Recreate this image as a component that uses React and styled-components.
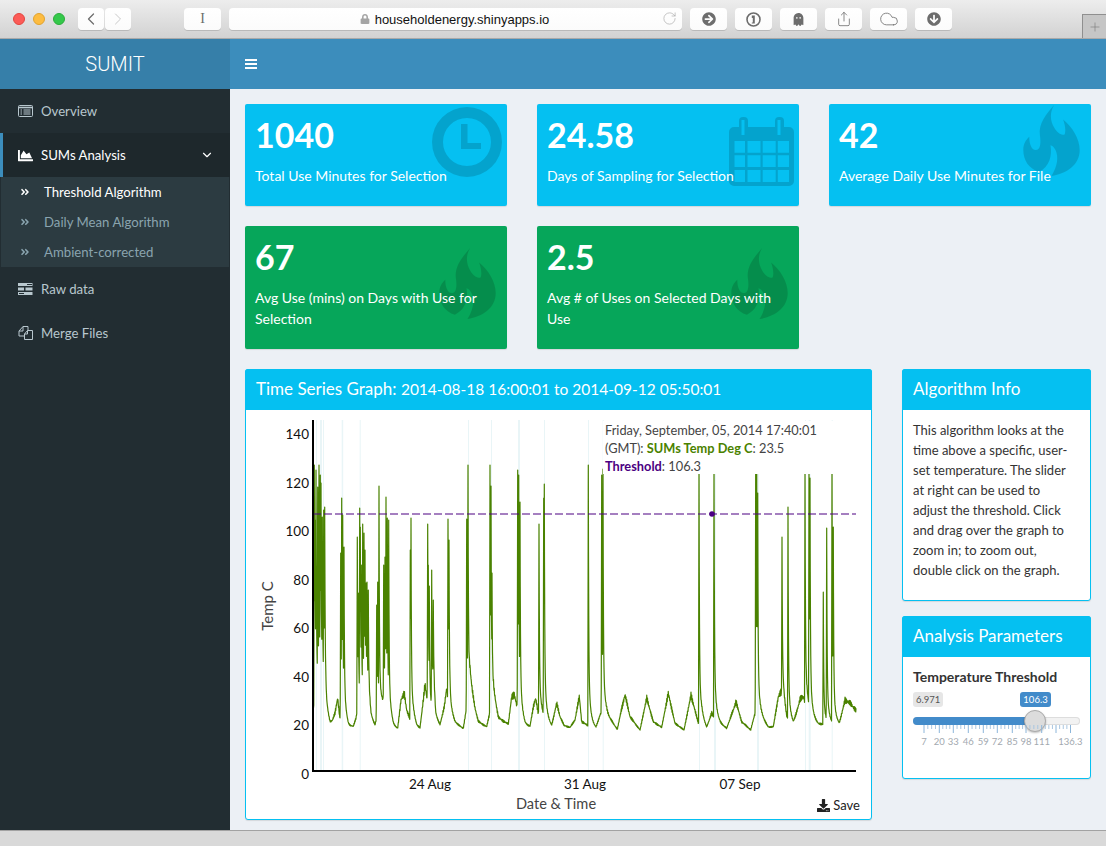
import React from 'react';
import styled, { createGlobalStyle } from 'styled-components';
import { ChevronLeft, ChevronRight, ChevronDown, RotateCw, Share, Cloud, Plus } from 'lucide-react';
import {
  FaLock,
  FaArrowCircleRight,
  FaArrowCircleDown,
  FaGhost,
  FaChartArea,
  FaAngleDoubleRight,
  FaDownload,
} from 'react-icons/fa';

const UI_FONT = '"Lato", "Noto Sans", sans-serif';

const GlobalStyle = createGlobalStyle`
  html, body {
    margin: 0;
    height: 100%;
    overflow: hidden;
    background: #ecf0f5;
    font-family: ${UI_FONT};
  }
  * { box-sizing: border-box; }
`;

const Page = styled.div`
  display: flex;
  flex-direction: column;
  height: 846px;
`;

/* ---------- browser chrome ---------- */

const Chrome = styled.div`
  display: flex;
  align-items: flex-start;
  height: 39px;
  padding: 8px 0 0 13px;
  background: linear-gradient(#ededed, #d2d2d2);
  border-bottom: 1px solid #a9a9a9;
`;

const Light = styled.span`
  width: 12px;
  height: 12px;
  margin: 5px 8px 0 0;
  border-radius: 50%;
  background: ${props => props.$color};
  border: 1px solid ${props => props.$edge};
`;

const ToolButton = styled.div`
  display: flex;
  align-items: center;
  justify-content: center;
  width: ${props => props.$w || 37}px;
  height: 22px;
  margin-left: ${props => props.$ml || 8}px;
  background: linear-gradient(#fff, #fbfbfb);
  border-radius: 4px;
  box-shadow: 0 1px 0 #b9b9b9;
  color: #6d6d6d;
  font: 14px "Liberation Serif", serif;
`;

const UrlBar = styled(ToolButton)`
  position: relative;
  gap: 5px;
  padding-right: 2px;
  font: 13px "Liberation Sans", sans-serif;
  color: #111;
  svg:first-child { color: #a4a4a4; }
`;

const Reload = styled.span`
  position: absolute;
  right: 5px;
  top: 3px;
  color: #6d6d6d;
`;

const NewTab = styled.div`
  display: flex;
  align-items: center;
  justify-content: center;
  width: 24px;
  height: 24px;
  margin: 6px 0 0 auto;
  background: #c6c6c6;
  border: 1px solid #8f8f8f;
  border-width: 1px 0 0 1px;
  color: #777;
`;

const WindowFoot = styled.div`
  height: 16px;
  background: #d9d9d9;
  border-top: 1px solid #a2a2a2;
`;

/* ---------- admin layout ---------- */

const Header = styled.header`
  display: flex;
  height: 50px;
  background: #3c8dbc;
`;

const Logo = styled.div`
  width: 230px;
  background: #367fa9;
  color: #fff;
  font: 300 20px/50px "Roboto", sans-serif;
  text-align: center;
`;

const Toggle = styled.div`
  display: flex;
  align-items: center;
  padding-left: 15px;
  color: #fff;
`;

const Body = styled.div`
  display: flex;
  flex: 1;
  min-height: 0;
`;

const Sidebar = styled.nav`
  width: 230px;
  background: #222d32;
  font-size: 13.2px;
`;

const MenuItem = styled.div`
  display: flex;
  align-items: center;
  height: 44px;
  padding-left: ${props => (props.$active ? 15 : 18)}px;
  padding-right: 16px;
  color: ${props => (props.$active ? '#fff' : '#b8c7ce')};
  background: ${props => (props.$active ? '#1e282c' : 'transparent')};
  border-left: ${props => (props.$active ? '3px solid #3c8dbc' : 'none')};
`;

const MenuIcon = styled.span`
  display: flex;
  justify-content: center;
  width: 15px;
  margin-right: 8px;
`;

const Caret = styled.span`
  display: flex;
  margin-left: auto;
`;

const SubMenu = styled.div`
  margin: 0 1px;
  padding: 0;
  background: #2c3b41;
`;

const SubItem = styled.div`
  display: flex;
  align-items: center;
  height: 30px;
  padding-left: 19px;
  color: ${props => (props.$active ? '#fff' : '#8aa4af')};
  svg { margin-right: 14px; }
`;

const Content = styled.main`
  flex: 1;
  padding: 15px;
`;

const StatGrid = styled.div`
  display: grid;
  grid-template-columns: repeat(3, 262px);
  gap: 20px 30px;
  margin-bottom: 20px;
`;

const StatBox = styled.div`
  position: relative;
  overflow: hidden;
  min-height: 102px;
  padding: 10px;
  border-radius: 2px;
  color: #fff;
  background: ${props => (props.$tone === 'green' ? '#06a65a' : '#05c0f1')};
  box-shadow: 0 1px 1px rgba(0, 0, 0, 0.1);
`;

const StatValue = styled.h3`
  position: relative;
  margin: 0 0 9px;
  font-size: 34px;
  font-weight: 700;
  line-height: 42px;
`;

const StatLabel = styled.p`
  position: relative;
  margin: 0 0 10px;
  font-size: 14px;
  line-height: 21px;
`;

const StatIcon = styled.svg`
  position: absolute;
  top: ${props => props.$top}px;
  right: ${props => props.$right}px;
  fill: rgba(0, 0, 0, 0.15);
`;

const Lower = styled.div`
  display: grid;
  grid-template-columns: 627px 189px;
  gap: 30px;
  align-items: start;
`;

const SideStack = styled.div`
  display: flex;
  flex-direction: column;
  gap: 15px;
`;

const Panel = styled.section`
  border: 1px solid #05c0f1;
  border-radius: 3px;
  background: #fff;
  box-shadow: 0 1px 1px rgba(0, 0, 0, 0.1);
`;

const PanelTitle = styled.h3`
  margin: -1px -1px 0;
  padding: 0 11px;
  height: 41px;
  background: #05c0f1;
  border-radius: 3px 3px 0 0;
  color: #fff;
  font-size: 17px;
  font-weight: 400;
  line-height: 39px;
  white-space: nowrap;
`;

// Lato digits run wider than the rest of the title
const TitleRange = styled.span`
  font-size: 15.5px;
`;

const ChartBody = styled.div`
  position: relative;
  height: 409px;
`;

const ChartSvg = styled.svg`
  display: block;
`;

const AxisText = styled.text`
  font-family: ${UI_FONT};
  font-size: ${props => props.$size || 13.5}px;
  fill: ${props => props.$fill || '#111'};
  text-anchor: ${props => props.$anchor || 'middle'};
`;

const Legend = styled.div`
  position: absolute;
  left: 357px;
  top: 11px;
  width: 250px;
  height: 53px;
  padding-left: 2px;
  background: #fff;
  color: #444;
  font-size: 12.8px;
  line-height: 18px;
  white-space: nowrap;
`;

const SeriesName = styled.b`
  color: ${props => props.$color};
`;

const SaveLink = styled.div`
  position: absolute;
  right: 11px;
  bottom: 6px;
  display: flex;
  align-items: center;
  gap: 3px;
  color: #222;
  font-size: 13px;
`;

const InfoText = styled.div`
  height: 190px;
  padding: 10px;
  color: #333;
  font-size: 13px;
  line-height: 20px;
  white-space: nowrap;
`;

const ParamBody = styled.div`
  height: 121px;
  padding: 10px;
`;

const ParamLabel = styled.div`
  color: #333;
  font-size: 14px;
  font-weight: 700;
  line-height: 20px;
  white-space: nowrap;
`;

const SliderWrap = styled.div`
  position: relative;
  height: 60px;
  margin-top: 5px;
`;

const Badge = styled.span`
  position: absolute;
  top: 0;
  padding: 0 3px;
  border-radius: 3px;
  font-size: 9.5px;
  line-height: 15px;
  white-space: nowrap;
  color: ${props => (props.$on ? '#fff' : '#555')};
  background: ${props => (props.$on ? '#428bca' : '#e6e6e6')};
`;

const Track = styled.div`
  position: absolute;
  top: 25px;
  left: 0;
  right: 0;
  height: 8px;
  border-radius: 4px;
  background: #f2f2f2;
  box-shadow: inset 0 0 0 1px #ddd;
`;

const TrackFill = styled.div`
  height: 100%;
  border-radius: 4px 0 0 4px;
  background: #428bca;
`;

const Handle = styled.div`
  position: absolute;
  top: 18px;
  width: 22px;
  height: 22px;
  margin-left: -11px;
  border-radius: 50%;
  border: 1px solid #aaa;
  background: #dcdcdc;
  box-shadow: 0 1px 2px rgba(0, 0, 0, 0.25);
`;

const TickSvg = styled.svg`
  position: absolute;
  top: 33px;
  left: 0;
`;

/* ---------- icons ---------- */

const Flame = ({ top }) => (
  <StatIcon $top={top} $right={11} width="57" height="71" viewBox="25 14 170 214">
    <path d="M118 14C104 36 106 62 118 82C126 96 140 108 150 102C154 90 150 72 145 58C172 80 195 115 195 150C195 195 155 222 110 228C128 200 132 170 122 150C117 140 112 136 107 135C112 165 105 200 72 215C42 208 25 180 25 150C25 132 32 120 43 110C43 132 50 150 62 150C78 150 78 125 75 105C70 70 95 40 118 14Z" />
  </StatIcon>
);

const ClockIcon = () => (
  <StatIcon $top={3} $right={5} width="70" height="70" viewBox="0 0 70 70">
    <path
      fillRule="evenodd"
      d="M35 0a35 35 0 1 0 0 70a35 35 0 1 0 0-70ZM35 11a24 24 0 1 1 0 48a24 24 0 1 1 0-48Z"
    />
    <path d="M29 17h6.5v19h13.5v6h-20Z" />
  </StatIcon>
);

// calendar: body with a 4x3 grid of holes, binder rings poke out on top
const CalendarIcon = () => {
  const cols = [[5.5, 16], [18.5, 31.5], [33.7, 46.7], [48.8, 60]];
  const rows = [[25, 36.7], [39.3, 51], [54, 66]];
  const holes = rows
    .flatMap(([y0, y1]) => cols.map(([x0, x1]) => `M${x0} ${y0}H${x1}V${y1}H${x0}Z`))
    .join('');
  return (
    <StatIcon $top={12} $right={5} width="65" height="70" viewBox="0 0 65 70">
      <path
        fillRule="evenodd"
        d={`M5 11H60a5 5 0 0 1 5 5V65a5 5 0 0 1-5 5H5a5 5 0 0 1-5-5V16a5 5 0 0 1 5-5ZM12.5 11h3v8h-3ZM48.5 11h3v8h-3Z${holes}`}
      />
      <path
        fillRule="evenodd"
        d="M10 11V5a4 4 0 0 1 4-4h1a4 4 0 0 1 4 4v6ZM46 11V5a4 4 0 0 1 4-4h1a4 4 0 0 1 4 4v6ZM12.5 11h3V4h-3ZM48.5 11h3V4h-3Z"
      />
    </StatIcon>
  );
};

const OnePassword = () => (
  <svg width="15" height="15" viewBox="0 0 15 15">
    <circle cx="7.5" cy="7.5" r="6.5" fill="none" stroke="#6d6d6d" strokeWidth="1.6" />
    <path d="M5.8 3.6h3v8h-3v-1.2h1V6h-1Z" fill="#6d6d6d" />
  </svg>
);

const MenuBars = () => (
  <svg width="12" height="10" viewBox="0 0 12 10" fill="currentColor">
    <path d="M0 0h12v2H0ZM0 4h12v2H0ZM0 8h12v2H0Z" />
  </svg>
);

const OverviewIcon = () => (
  <svg width="15" height="12" viewBox="0 0 15 12" fill="none" stroke="currentColor">
    <rect x="0.5" y="0.5" width="14" height="11" rx="1" />
    <path d="M0.5 2.5h14" strokeWidth="1.6" />
    <path d="M2.5 5h1.5M5.5 5h7M2.5 7h1.5M5.5 7h7M2.5 9h1.5M5.5 9h7" />
  </svg>
);

const RawDataIcon = () => (
  <svg width="15" height="12" viewBox="0 0 15 12" fill="currentColor">
    <path d="M0 0h14.5v3H0ZM0 4.5h6v3H0ZM7.5 4.5h7v3h-7ZM0 9h14.5v3H0Z" />
    <path d="M9 1h5v1H9ZM1 10h5v1H1Z" fill="#222d32" />
  </svg>
);

const MergeIcon = () => (
  <svg width="15" height="14" viewBox="0 0 15 14" fill="none" stroke="currentColor">
    <path d="M5 .5h5v4M5 .5l-4 4.5v5h5M5 .5v4.5H1M6.5 13.5V8l3-3.5h5v9ZM9.5 4.5V8h-3" />
  </svg>
);

/* ---------- chart data, all in page pixels ---------- */

const fromZoom = (list, ox, oy) => list.map(([x, y]) => [ox + x / 3, oy + y / 3]);

const baseLine = [
  ...fromZoom(
    [[205, 260], [215, 230], [222, 230], [240, 230], [245, 290], [255, 315], [262, 305], [270, 280], [278, 235], [284, 290], [300, 300], [310, 323], [325, 320], [333, 295], [340, 250], [372, 250], [378, 300], [390, 318], [396, 290], [420, 250], [432, 290], [445, 322], [458, 327], [468, 240], [478, 222], [485, 270], [495, 297], [505, 300], [515, 322], [525, 325], [535, 240], [540, 195], [548, 250], [558, 280], [565, 200], [572, 300], [585, 317], [598, 260], [605, 205], [618, 290], [630, 310], [655, 325], [675, 195], [690, 270], [700, 305], [725, 320], [745, 230], [760, 295], [790, 312], [800, 230], [808, 225], [815, 255], [825, 290], [840, 318], [855, 320], [865, 260], [872, 235], [880, 280], [905, 305], [920, 320], [935, 250], [945, 290], [958, 318]],
    245,
    620
  ),
  ...fromZoom(
    [[8, 315], [30, 322], [45, 300], [58, 230], [65, 305], [82, 315], [95, 320], [108, 325], [122, 280], [140, 290], [155, 305], [172, 328], [185, 265], [195, 225], [210, 290], [240, 330], [260, 235], [280, 305], [305, 322], [325, 220], [345, 310], [372, 330], [393, 225], [415, 310], [425, 300], [440, 325], [455, 280], [470, 305], [500, 325], [520, 270], [528, 245], [545, 305], [572, 330], [585, 280], [605, 295], [625, 322], [640, 320], [655, 230], [665, 215], [680, 300], [700, 315], [720, 240], [730, 230], [755, 300], [775, 313], [838, 315], [855, 240], [870, 250], [887, 270]],
    560,
    620
  ),
];

const spikes = [
  [314.3, 465], [315, 520], [316, 470], [317.7, 487], [319, 465], [320.3, 475], [321, 483], [322.3, 517], [323.7, 510], [324.7, 507],
  [340.7, 553], [341.7, 498], [342.7, 515], [344, 547],
  [357.3, 537], [358.3, 593], [359.7, 508], [360.3, 527], [361.3, 565], [362.7, 524], [364, 533], [365, 550], [366, 583], [367, 582], [368.3, 590],
  [376.7, 605], [377.7, 582], [379, 486], [383.7, 565], [385, 557], [386, 497], [387.3, 518], [388.7, 520],
  [410.3, 550], [411, 518],
  [427.7, 524], [428.3, 565], [429.3, 586], [431.7, 570], [433.3, 600],
  [448, 519], [449, 540],
  [466.7, 519], [468, 465],
  [490, 465], [491, 486], [492, 573],
  [517.7, 470], [518.7, 475], [520, 502],
  [539, 524], [543.7, 498], [544.3, 484],
  [588.3, 465], [601.7, 475], [603, 469],
  [699, 465], [714, 465],
  [755.7, 465], [756.7, 470], [757.7, 493],
  [782, 537], [788, 507],
  [805, 470], [809, 470], [810, 478],
  [823.3, 592], [826.7, 528], [832, 465], [833.3, 527],
];

const bands = [
  [316, 1], [320, 2], [323, 1], [341.7, 1.5], [359.7, 1], [468, 1], [491, 1], [518, 2], [544, 1],
  [588, 1], [602.7, 1], [699, 1], [714, 2], [757, 2], [805, 1], [808.7, 2], [831.7, 1],
];

const baseAt = x => {
  for (let i = 1; i < baseLine.length; i++) {
    const [x0, y0] = baseLine[i - 1];
    const [x1, y1] = baseLine[i];
    if (x <= x1) return y0 + ((y1 - y0) * (x - x0)) / (x1 - x0 || 1);
  }
  return baseLine[baseLine.length - 1][1];
};

const seriesPath = () => {
  const xs = [];
  for (let x = 313; x <= 856; x += 0.25) xs.push(x);
  spikes.forEach(([x]) => xs.push(x));
  xs.sort((a, b) => a - b);
  return xs
    .map((x, i) => {
      const raw = baseAt(x);
      // jitter grows on the daily humps, stays small on the flat night values
      const amp = 0.35 + Math.max(0, 727 - raw) * 0.05;
      const base = raw + (Math.sin(x * 9.1) + Math.sin(x * 17.3)) * amp;
      let lift = 0;
      spikes.forEach(([sx, top]) => {
        const dx = x - sx;
        const h = base - top;
        let f = 0;
        if (dx < 0) f = Math.max(0, 1 + dx / 0.5);
        else f = 0.8 * Math.exp(-dx / 0.4) + 0.2 * Math.exp(-dx / 2.2);
        lift = Math.max(lift, h * f);
      });
      return `${i ? 'L' : 'M'}${x.toFixed(2)} ${(base - lift).toFixed(1)}`;
    })
    .join('');
};

const yTicks = [0, 20, 40, 60, 80, 100, 120, 140];
const xTicks = [
  ['24 Aug', 430],
  ['31 Aug', 585],
  ['07 Sep', 740],
];

const TimeSeries = () => (
  <ChartSvg width="625" height="409" viewBox="246 410 625 409">
    {bands.map(([x, w]) => (
      <rect key={x} x={x} y="420" width={w} height="351" fill="#e9f5f7" />
    ))}
    <path d={seriesPath()} fill="none" stroke="#4a8200" strokeWidth="1.2" strokeLinejoin="round" />
    <line x1="313" x2="856" y1="514" y2="514" stroke="#4b0082" strokeOpacity="0.5" strokeWidth="2" strokeDasharray="8 3" />
    <circle cx="712" cy="514" r="2.8" fill="#4b0082" />
    <path d="M313 420V771H856" fill="none" stroke="#000" strokeWidth="2" />
    {yTicks.map((v, i) => (
      <AxisText key={v} x="309" y={778.5 - i * 48.5} $anchor="end">
        {v}
      </AxisText>
    ))}
    {xTicks.map(([label, x]) => (
      <AxisText key={label} x={x} y="789">
        {label}
      </AxisText>
    ))}
    <AxisText x="556" y="809" $size={14.6} $fill="#444">
      Date &amp; Time
    </AxisText>
    <AxisText transform="translate(273 606) rotate(-90)" $size={15} $fill="#444">
      Temp C
    </AxisText>
  </ChartSvg>
);

const SLIDER = { min: 6.971, max: 136.3, value: 106.3, width: 167, handle: 22 };

const sliderTicks = [
  ['7', 11], ['20', 26.3], ['33', 40.3], ['46', 55.3], ['59', 70.3], ['72', 84.3], ['85', 99.3], ['98', 113], ['111', 128.7], ['', 143], ['136.3', 157.5],
];

const ThresholdSlider = () => {
  const pct = (SLIDER.value - SLIDER.min) / (SLIDER.max - SLIDER.min);
  const left = pct * (SLIDER.width - SLIDER.handle) + SLIDER.handle / 2;
  const minor = [];
  sliderTicks.slice(0, -1).forEach(([, x], i) => {
    const next = sliderTicks[i + 1][1];
    for (let k = 1; k < 4; k++) minor.push(x + ((next - x) * k) / 4);
  });
  return (
    <SliderWrap>
      <Badge>6.971</Badge>
      <Badge $on style={{ left: left - 15 }}>
        106.3
      </Badge>
      <Track>
        <TrackFill style={{ width: left }} />
      </Track>
      <Handle style={{ left }} />
      <TickSvg width="170" height="24" viewBox="0 0 170 24">
        {minor.map(x => (
          <line key={x} x1={x} x2={x} y1="0" y2="4" stroke="#a9c6e0" />
        ))}
        {sliderTicks.map(([label, x]) => (
          <g key={x}>
            <line x1={x} x2={x} y1="0" y2="8" stroke="#8db6da" />
            <AxisText x={x} y="20" $size={9.5} $fill="#a3a9b0">
              {label}
            </AxisText>
          </g>
        ))}
      </TickSvg>
    </SliderWrap>
  );
};

const App = () => (
  <Page>
    <GlobalStyle />
    <Chrome>
      <Light $color="#fc5b57" $edge="#e2463f" />
      <Light $color="#fdbc40" $edge="#e0a32f" />
      <Light $color="#34c84a" $edge="#2bac3b" />
      <ToolButton $w={26} $ml={5}>
        <ChevronLeft size={20} strokeWidth={1.5} />
      </ToolButton>
      <ToolButton $w={26} $ml={1}>
        <ChevronRight size={20} strokeWidth={1.2} color="#c9c9c9" />
      </ToolButton>
      <ToolButton $ml={53}>I</ToolButton>
      <UrlBar $w={453}>
        <FaLock size={10} />
        householdenergy.shinyapps.io
        <Reload>
          <RotateCw size={15} strokeWidth={1} />
        </Reload>
      </UrlBar>
      <ToolButton>
        <FaArrowCircleRight size={14} />
      </ToolButton>
      <ToolButton>
        <OnePassword />
      </ToolButton>
      <ToolButton>
        <FaGhost size={13} />
      </ToolButton>
      <ToolButton>
        <Share size={16} strokeWidth={1.2} />
      </ToolButton>
      <ToolButton>
        <Cloud size={20} strokeWidth={1} />
      </ToolButton>
      <ToolButton>
        <FaArrowCircleDown size={14} />
      </ToolButton>
      <NewTab>
        <Plus size={14} strokeWidth={1} />
      </NewTab>
    </Chrome>

    <Header>
      <Logo>SUMIT</Logo>
      <Toggle>
        <MenuBars />
      </Toggle>
    </Header>

    <Body>
      <Sidebar>
        <MenuItem>
          <MenuIcon>
            <OverviewIcon />
          </MenuIcon>
          Overview
        </MenuItem>
        <MenuItem $active>
          <MenuIcon>
            <FaChartArea size={15} />
          </MenuIcon>
          SUMs Analysis
          <Caret>
            <ChevronDown size={14} />
          </Caret>
        </MenuItem>
        <SubMenu>
          <SubItem $active>
            <FaAngleDoubleRight size={10} />
            Threshold Algorithm
          </SubItem>
          <SubItem>
            <FaAngleDoubleRight size={10} />
            Daily Mean Algorithm
          </SubItem>
          <SubItem>
            <FaAngleDoubleRight size={10} />
            Ambient-corrected
          </SubItem>
        </SubMenu>
        <MenuItem>
          <MenuIcon>
            <RawDataIcon />
          </MenuIcon>
          Raw data
        </MenuItem>
        <MenuItem>
          <MenuIcon>
            <MergeIcon />
          </MenuIcon>
          Merge Files
        </MenuItem>
      </Sidebar>

      <Content>
        <StatGrid>
          <StatBox>
            <ClockIcon />
            <StatValue>1040</StatValue>
            <StatLabel>Total Use Minutes for Selection</StatLabel>
          </StatBox>
          <StatBox>
            <CalendarIcon />
            <StatValue>24.58</StatValue>
            <StatLabel>Days of Sampling for Selection</StatLabel>
          </StatBox>
          <StatBox>
            <Flame top={1} />
            <StatValue>42</StatValue>
            <StatLabel>Average Daily Use Minutes for File</StatLabel>
          </StatBox>
          <StatBox $tone="green">
            <Flame top={22} />
            <StatValue>67</StatValue>
            <StatLabel>Avg Use (mins) on Days with Use for Selection</StatLabel>
          </StatBox>
          <StatBox $tone="green">
            <Flame top={22} />
            <StatValue>2.5</StatValue>
            <StatLabel>Avg # of Uses on Selected Days with Use</StatLabel>
          </StatBox>
        </StatGrid>

        <Lower>
          <Panel>
            <PanelTitle>
              Time Series Graph: <TitleRange>2014-08-18 16:00:01 to 2014-09-12 05:50:01</TitleRange>
            </PanelTitle>
            <ChartBody>
              <TimeSeries />
              <Legend>
                Friday, September, 05, 2014 17:40:01
                <br />
                (GMT): <SeriesName $color="#4a8200">SUMs Temp Deg C</SeriesName>: 23.5
                <br />
                <SeriesName $color="#4b0082">Threshold</SeriesName>: 106.3
              </Legend>
              <SaveLink>
                <FaDownload size={13} />
                Save
              </SaveLink>
            </ChartBody>
          </Panel>

          <SideStack>
            <Panel>
              <PanelTitle>Algorithm Info</PanelTitle>
              <InfoText>
                This algorithm looks at the
                <br />
                time above a specific, user-
                <br />
                set temperature. The slider
                <br />
                at right can be used to
                <br />
                adjust the threshold. Click
                <br />
                and drag over the graph to
                <br />
                zoom in; to zoom out,
                <br />
                double click on the graph.
              </InfoText>
            </Panel>
            <Panel>
              <PanelTitle>Analysis Parameters</PanelTitle>
              <ParamBody>
                <ParamLabel>Temperature Threshold</ParamLabel>
                <ThresholdSlider />
              </ParamBody>
            </Panel>
          </SideStack>
        </Lower>
      </Content>
    </Body>
    <WindowFoot />
  </Page>
);

export default App;
